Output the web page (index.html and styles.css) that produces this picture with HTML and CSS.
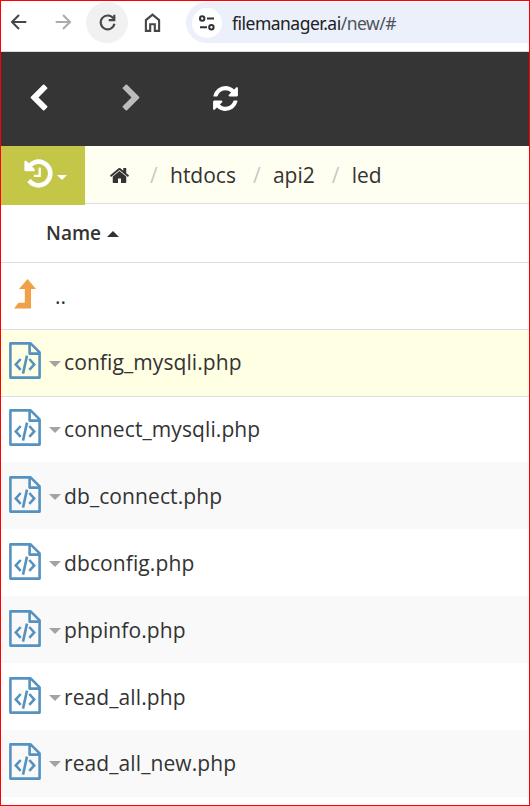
FILE: index.html
```
<!DOCTYPE html>
<html lang="en">
<head>
<meta charset="utf-8">
<title>File manager</title>
<link rel="stylesheet" href="styles.css">
</head>
<body>
<svg class="defs" width="0" height="0" aria-hidden="true">
  <symbol id="file-code" viewBox="0 0 32 37">
    <g fill="none" stroke="currentColor">
      <path stroke-width="2.6" stroke-linejoin="round" d="M1.400 1.400H21.600L30.600 10.400V35.600H1.400ZM20.600 1.400V11.600H30.600"/>
      <path stroke-width="2.600" d="M11.700 17L6.800 22.400L11.700 27.800M20.300 17L25.200 22.400L20.300 27.800M18 13.600L14 31.600"/>
    </g>
  </symbol>
</svg>
<div class="window">
  <div class="browser">
    <svg class="nav-icon" viewBox="0 0 20 20"><path d="M17.300 10H3.400M10 3L3 10L10 17"/></svg>
    <svg class="nav-icon forward" viewBox="0 0 20 20"><path d="M2.700 10H16.600M10 3L17 10L10 17"/></svg>
    <span class="reload"><svg class="nav-icon" viewBox="0 0 20 20"><path d="M15.600 6.200A6.600 6.600 0 1 0 16.600 11.200M16.500 2.600V7.700H11.200"/></svg></span>
    <svg class="nav-icon home" viewBox="0 0 20 20"><path d="M3.700 18V7.700L10 2.500L16.300 7.700V18H12.200V11.700H7.800V18Z"/></svg>
    <div class="address">
      <span class="site-info"><svg width="16" height="16" viewBox="0 0 16 16"><path d="M8 3.500H15M1 12.300H8"/><circle cx="3.200" cy="3.500" r="2.200"/><circle cx="12.400" cy="12.300" r="2.200"/></svg></span>
      <span class="url">filemanager.ai<span class="path">/new/#</span></span>
    </div>
  </div>

  <div class="toolbar">
    <svg class="chev-left" viewBox="0 0 1792 1792"><path d="M1427 301l-531 531 531 531q19 19 19 45t-19 45l-166 166q-19 19-45 19t-45-19l-742-742q-19-19-19-45t19-45l742-742q19-19 45-19t45 19l166 166q19 19 19 45t-19 45z"/></svg>
    <svg class="chev-right" viewBox="0 0 1792 1792"><path transform="matrix(-1 0 0 1 1792 0)" d="M1427 301l-531 531 531 531q19 19 19 45t-19 45l-166 166q-19 19-45 19t-45-19l-742-742q-19-19-19-45t19-45l742-742q19-19 45-19t45 19l166 166q19 19 19 45t-19 45z"/></svg>
    <svg class="refresh" viewBox="0 0 1792 1792"><path d="M1639 1056q0 5-1 7-64 268-268 434.500t-478 166.500q-146 0-282.500-55t-243.500-157l-129 129q-19 19-45 19t-45-19-19-45v-448q0-26 19-45t45-19h448q26 0 45 19t19 45-19 45l-137 137q71 66 161 102t187 36q134 0 250-65t186-179q11-17 53-117 8-23 30-23h192q13 0 22.500 9.500t9.500 22.500zm25-800v448q0 26-19 45t-45 19h-448q-26 0-45-19t-19-45 19-45l138-138q-148-137-349-137-134 0-250 65t-186 179q-11 17-53 117-8 23-30 23h-199q-13 0-22.500-9.500t-9.500-22.500v-7q65-268 270-434.500t480-166.500q146 0 284 55.500t245 156.500l130-129q19-19 45-19t45 19 19 45z"/></svg>
  </div>

  <div class="pathbar">
    <div class="history">
      <svg viewBox="0 0 1792 1792"><path d="M1664 896q0 156-61 298t-164 245-245 164-298 61q-172 0-327-72.500t-264-204.500q-7-10-6.500-22.500t8.500-20.500l137-138q10-9 25-9 16 2 23 12 73 95 179 147t225 52q104 0 198.500-40.500t163.500-109.500 109.500-163.500 40.500-198.500-40.500-198.500-109.500-163.500-163.500-109.500-198.500-40.500q-98 0-188 35.500t-160 101.500l137 138q31 30 14 69-17 40-59 40h-448q-26 0-45-19t-19-45v-448q0-42 40-59 39-17 69 14l130 129q107-101 244.500-156.500t284.500-55.500q156 0 298 61t245 164 164 245 61 298zm-640-288v448q0 14-9 23t-23 9h-320q-14 0-23-9t-9-23v-64q0-14 9-23t23-9h224v-352q0-14 9-23t23-9h64q14 0 23 9t9 23z"/></svg>
      <span class="caret"></span>
    </div>
    <div class="crumbs">
      <svg class="home-crumb" viewBox="0 0 1792 1792"><path d="M1472 992v480q0 26-19 45t-45 19h-384v-384h-256v384h-384q-26 0-45-19t-19-45v-480q0-1 .5-3t.5-3l575-474 575 474q1 2 1 6zm223-69l-62 74q-8 9-21 11h-3q-13 0-21-7l-692-577-692 577q-12 8-24 7-13-2-21-11l-62-74q-8-10-7-23.500t11-21.500l719-599q32-26 76-26t76 26l244 204v-195q0-14 9-23t23-9h192q14 0 23 9t9 23v408l219 182q10 8 11 21.500t-7 23.500z"/></svg>
      <span class="sep">/</span><span>htdocs</span><span class="sep">/</span><span>api2</span><span class="sep">/</span><span>led</span>
    </div>
  </div>

  <div class="list-head"><span>Name</span><span class="sort"></span></div>
  <div class="row up"><svg width="22" height="30" viewBox="0 0 22 30"><path d="M13.600 0L22 10H17V29.500H0L4.500 23.700H10.800V10H5Z"/></svg><span>..</span></div>
  <div class="row selected"><svg class="file"><use href="#file-code"/></svg><span class="caret"></span><span class="name">config_mysqli.php</span></div>
  <div class="row first"><svg class="file"><use href="#file-code"/></svg><span class="caret"></span><span class="name">connect_mysqli.php</span></div>
  <div class="row alt"><svg class="file"><use href="#file-code"/></svg><span class="caret"></span><span class="name">db_connect.php</span></div>
  <div class="row"><svg class="file"><use href="#file-code"/></svg><span class="caret"></span><span class="name">dbconfig.php</span></div>
  <div class="row alt"><svg class="file"><use href="#file-code"/></svg><span class="caret"></span><span class="name">phpinfo.php</span></div>
  <div class="row"><svg class="file"><use href="#file-code"/></svg><span class="caret"></span><span class="name">read_all.php</span></div>
  <div class="row alt last"><svg class="file"><use href="#file-code"/></svg><span class="caret"></span><span class="name">read_all_new.php</span></div>
</div>
</body>
</html>
```
FILE: styles.css
```
* { box-sizing: border-box; }
body { margin: 0; background: #fff; color: #333; font-family: "Open Sans", sans-serif; }
svg { display: block; flex: none; }
.defs { position: absolute; }
.window { width: 530px; height: 806px; border: 1px solid #f00; overflow: hidden; background: #fff; }

.browser { display: flex; align-items: flex-start; height: 51px; padding-top: 1px; border-bottom: 1px solid #dcdcdc; }
.nav-icon { width: 20px; height: 20px; margin: 10px 0 0 8px; fill: none; stroke: #474747; stroke-width: 2; }
.nav-icon.forward { margin-left: 24px; stroke: #ababab; }
.reload { display: flex; align-items: center; justify-content: center; width: 42px; height: 41px; margin-left: 13px; border-radius: 50%; background: #f1f1f1; }
.reload .nav-icon { width: 21px; height: 21px; margin: 0; }
.nav-icon.home { width: 21px; height: 21px; margin-left: 14px; }
.address { display: flex; align-items: center; flex: 1; height: 41px; margin-left: 23px; padding-left: 6px; border-radius: 21px 0 0 21px; background: #ebf0fa; }
.site-info { display: flex; align-items: center; justify-content: center; width: 30px; height: 30px; border-radius: 50%; background: #fff; }
.site-info svg { fill: none; stroke: #303134; stroke-width: 2; }
.url { margin-left: 10px; font-family: "Noto Sans", sans-serif; font-size: 17.5px; line-height: 24px; letter-spacing: -0.51px; color: #202124; white-space: nowrap; }
.path { color: #50545a; }

.toolbar { display: flex; align-items: center; height: 94px; padding: 0 0 2px 23px; background: #353535; }
.toolbar svg { width: 29px; height: 29px; fill: #fff; }
.toolbar .chev-right { margin-left: 64px; fill: #bcbcbc; }
.toolbar .refresh { margin-left: 65px; }

.pathbar { display: flex; height: 58px; border-bottom: 1px solid #dedee0; background: #fffff1; }
.history { display: flex; align-items: center; width: 84px; height: 59px; padding-left: 21px; background: #c3c647; }
.history svg { width: 33px; height: 33px; margin-top: -4px; fill: #fff; }
.caret { width: 0; height: 0; border: 5px solid transparent; border-top-color: #a3a3a3; border-bottom: 0; flex: none; }
.history .caret { margin: 4px 0 0 2px; border-top-color: #fff; }
.crumbs { display: flex; align-items: center; padding-left: 24px; font-size: 21px; line-height: 30px; }
.home-crumb { width: 21px; height: 21px; margin-top: 1px; fill: #333; }
.sep { width: 8px; margin: 0 12px 0 17px; color: #c8c8c8; }
.home-crumb + .sep { margin-left: 20px; }

.list-head { display: flex; align-items: center; height: 59px; padding-left: 45px; border-bottom: 1px solid #dedee0; font-size: 19px; font-weight: 600; }
.sort { margin: 2px 0 0 6px; border: 6px solid transparent; border-bottom-color: #333; border-top: 0; }

.row { display: flex; align-items: center; height: 67px; padding-left: 8px; font-size: 21px; line-height: 30px; }
.row.up { padding-left: 13px; border-bottom: 1px solid #dedee0; }
.up svg { margin-top: -5px; fill: #f0a148; }
.up span { margin-left: 19px; }
.row.selected { padding-bottom: 2px; border-bottom: 1px solid #dedee0; background: #ffffe3; }
.row.first { height: 65px; padding-bottom: 2px; }
.row.last { padding-bottom: 2px; }
.row.alt { background: #f9f9f9; }
.file { width: 32px; height: 37px; margin-top: -3px; color: #5592bf; }
.row .caret { margin: 3px 3px 0 8px; border-width: 6px 6px 0; }
.name { letter-spacing: 0.1px; white-space: nowrap; }
```
